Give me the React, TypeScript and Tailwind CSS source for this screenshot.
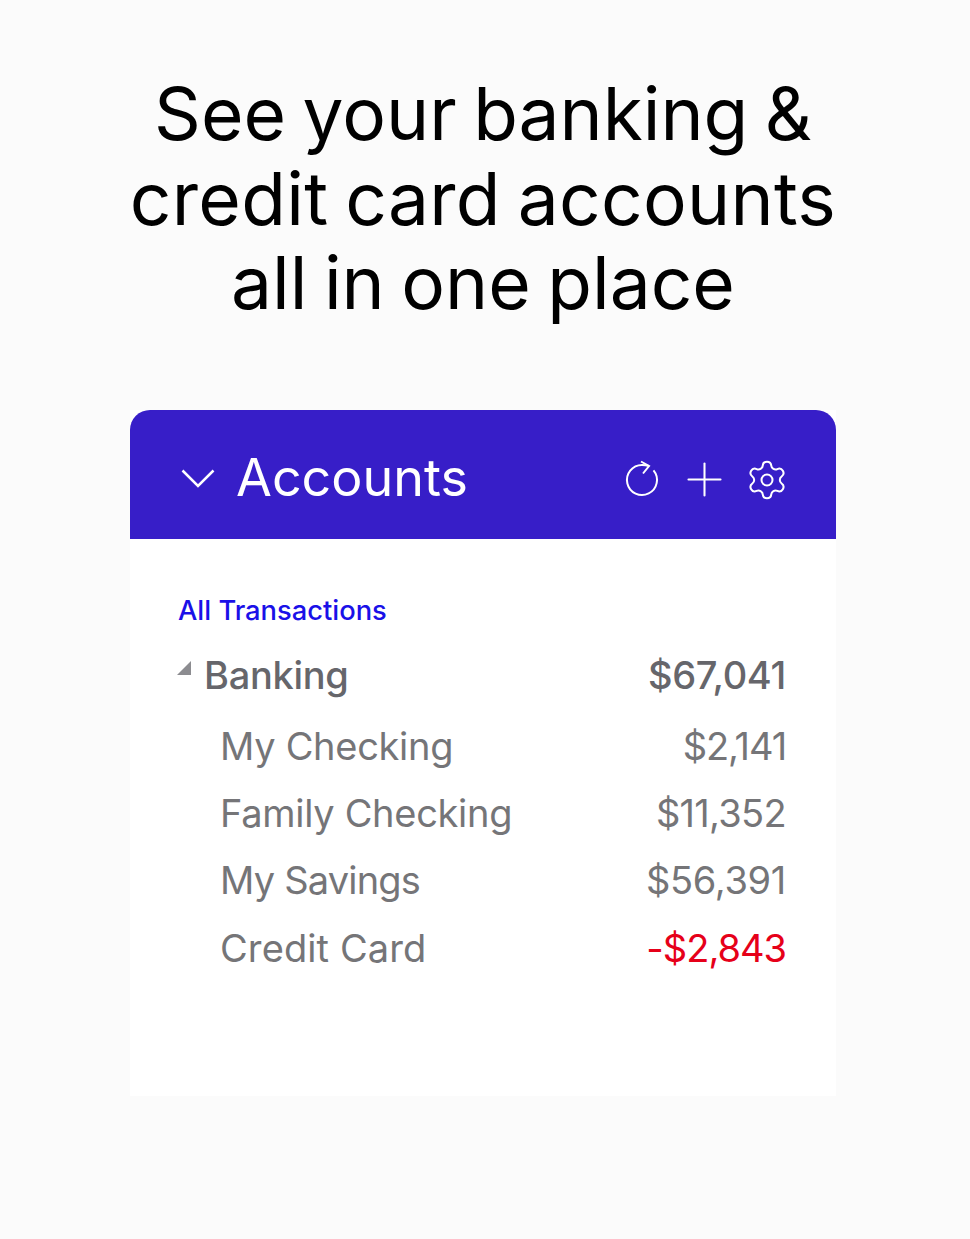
import { Plus, Settings } from "lucide-react";

const rows = [
  { name: "My Checking", amount: "$2,141", nameClass: "tracking-[-0.3px]", amountClass: "tracking-[-1.1px] text-[#757578]" },
  { name: "Family Checking", amount: "$11,352", nameClass: "tracking-[-0.3px]", amountClass: "tracking-[-0.7px] text-[#757578]" },
  { name: "My Savings", amount: "$56,391", nameClass: "tracking-[-0.8px]", amountClass: "tracking-[-0.3px] text-[#757578]" },
  { name: "Credit Card", amount: "-$2,843", nameClass: "tracking-[0.1px]", amountClass: "tracking-[-1px] text-[#e60019]" },
];

export default function App() {
  return (
    <div className="min-h-[1239px] bg-[#fbfbfb] pt-[72px] font-['Inter',sans-serif]">
      <h1 className="w-[966px] text-center text-[73px] leading-[84.5px] [word-spacing:-4px] text-black">
        See your banking &amp;<br />
        <span className="tracking-[0.3px]">credit card accounts</span><br />
        all in one place
      </h1>

      <div className="ml-[130px] mt-[84px] w-[706px] bg-white">
        <div className="flex h-[129px] items-center rounded-t-[20px] bg-[#371ec8] pl-[48px] pr-[47px] pt-[8px] text-white">
          <svg width="40" height="40" viewBox="0 0 40 40" fill="none" stroke="currentColor" strokeWidth="2.5" className="mt-[3px]">
            <path d="M4.500 10.500 20 26 35.500 10.500" />
          </svg>
          <span className="ml-[18px] text-[52px] leading-none">Accounts</span>
          <div className="ml-auto mt-[3px] flex items-center">
            <svg width="40" height="40" viewBox="0 0 40 40" fill="none" stroke="currentColor" strokeWidth="2">
              <path d="M27 6C24.500 5.300 22.500 5 20 5A15 15 0 1 0 31.500 10.400" />
              <path d="M19 1.500 27 6 21 13.500" />
            </svg>
            <Plus size={55} strokeWidth={0.9} className="ml-[14.5px]" />
            <Settings size={44} strokeWidth={1.1} className="ml-[13.5px]" />
          </div>
        </div>

        <div className="h-[557px] pl-[48px] pr-[50px] pt-[56px]">
          <div className="text-[27.3px] font-medium leading-[32px] text-[#1a10e8]">All Transactions</div>

          <div className="mt-[22px] flex items-center justify-between text-[38px] font-medium leading-[52px] tracking-[-0.3px] text-[#66666b]">
            <div className="flex items-center">
              <span className="-ml-[1px] mb-[14px] h-0 w-0 border-b-[14px] border-l-[14px] border-b-[#8c8c90] border-l-transparent" />
              <span className="ml-[13px]">Banking</span>
            </div>
            <span>$67,041</span>
          </div>

          <div className="mt-[12px] flex flex-col">
            {rows.map((row) => (
              <div key={row.name} className="flex h-[67.3px] items-center justify-between pl-[42px] text-[38px] text-[#757578]">
                <span className={row.nameClass}>{row.name}</span>
                <span className={row.amountClass}>{row.amount}</span>
              </div>
            ))}
          </div>
        </div>
      </div>
    </div>
  );
}
